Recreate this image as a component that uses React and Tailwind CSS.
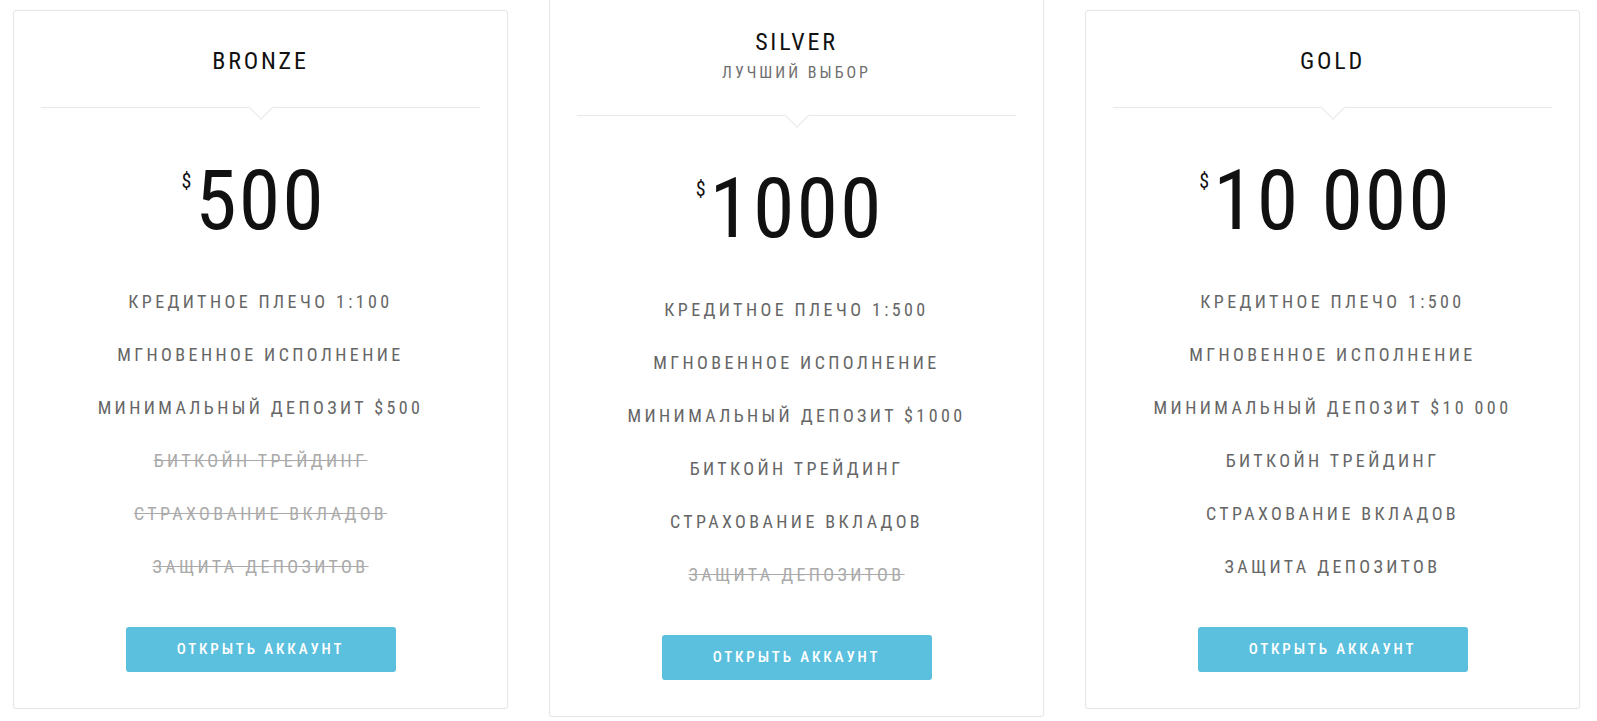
const plans = [
  {
    name: 'BRONZE',
    price: '500',
    features: [
      { text: 'Кредитное плечо 1:100', on: true },
      { text: 'Мгновенное исполнение', on: true },
      { text: 'Минимальный депозит $500', on: true },
      { text: 'Биткойн трейдинг', on: false },
      { text: 'Страхование вкладов', on: false },
      { text: 'Защита депозитов', on: false },
    ],
  },
  {
    name: 'SILVER',
    sub: 'Лучший выбор',
    price: '1000',
    features: [
      { text: 'Кредитное плечо 1:500', on: true },
      { text: 'Мгновенное исполнение', on: true },
      { text: 'Минимальный депозит $1000', on: true },
      { text: 'Биткойн трейдинг', on: true },
      { text: 'Страхование вкладов', on: true },
      { text: 'Защита депозитов', on: false },
    ],
  },
  {
    name: 'GOLD',
    price: '10 000',
    features: [
      { text: 'Кредитное плечо 1:500', on: true },
      { text: 'Мгновенное исполнение', on: true },
      { text: 'Минимальный депозит $10 000', on: true },
      { text: 'Биткойн трейдинг', on: true },
      { text: 'Страхование вкладов', on: true },
      { text: 'Защита депозитов', on: true },
    ],
  },
];

function PlanCard({ plan }) {
  const featured = !!plan.sub;
  return (
    <div
      className={`w-[495px] shrink-0 bg-white border border-[#e6e6e6] rounded-[3px] shadow-[0_0_2px_rgba(0,0,0,0.04)] ${
        featured ? '-mt-[9px]' : 'mt-[10px]'
      }`}
    >
      <div className="pt-[38px] pb-[34px] text-center">
        <h3 className="text-[24px] leading-[24px] tracking-[2.8px] text-[#111]">{plan.name}</h3>
        {plan.sub && (
          <p className="mt-[11px] text-[16px] leading-[16px] tracking-[3px] uppercase text-[#6f6f6f]">{plan.sub}</p>
        )}
      </div>

      <div className="relative mx-[27px] h-px bg-[#e8e8e8]">
        <span className="absolute left-1/2 -top-[9px] -ml-[9px] w-[18px] h-[18px] rotate-45 bg-white border-r border-b border-[#e8e8e8]" />
      </div>

      <div className="mt-[51px] flex justify-center text-[#111]">
        <span className="relative text-[84px] leading-[84px] tracking-[2px]">
          <span className="absolute right-full top-[12px] mr-[4px] text-[20px] leading-[20px] tracking-normal">$</span>
          {plan.price}
        </span>
      </div>

      <ul className="mt-[32px] text-center">
        {plan.features.map(f => (
          <li
            key={f.text}
            className={`h-[53px] leading-[53px] text-[18px] tracking-[3.4px] uppercase ${
              f.on ? 'text-[#666]' : 'text-[#aaa] line-through'
            }`}
          >
            {f.text}
          </li>
        ))}
      </ul>

      <div className="mt-[34px] mb-[36px] flex justify-center">
        <button className="w-[270px] h-[45px] rounded-[3px] bg-[#5bc0de] text-white text-[15px] font-medium tracking-[2.9px] uppercase">
          Открыть аккаунт
        </button>
      </div>
    </div>
  );
}

export default function App() {
  return (
    <div
      className="min-h-[721px] bg-white overflow-hidden pl-[13px] flex items-start gap-[41px] [font-stretch:80%]"
      style={{ fontFamily: '"Roboto Condensed", Roboto, "Liberation Sans Narrow", sans-serif' }}
    >
      {plans.map(p => (
        <PlanCard key={p.name} plan={p} />
      ))}
    </div>
  );
}
